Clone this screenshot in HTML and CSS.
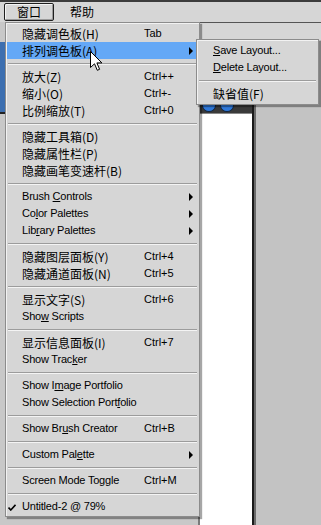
FILE: index.html
```html
<!DOCTYPE html>
<html lang="zh-CN">
<head>
  <meta charset="UTF-8" />
  <title>窗口菜单</title>
  <link rel="stylesheet" href="styles.css">
</head>
<body>
  <div class="menubar">
    <span class="top-item open">窗口</span>
    <span class="top-item">帮助</span>
  </div>

  <div class="workspace">
    <div class="side">
      <div class="side-title"></div>
    </div>
    <div class="doc-area">
      <div class="propbar"></div>
      <div class="doc-row">
        <div class="doc-window">
          <div class="doc-title"><span class="dot"></span><span class="dot"></span></div>
          <div class="doc-canvas"></div>
        </div>
        <div class="desk"></div>
      </div>
    </div>
  </div>

  <div class="menu main-menu">
    <div class="item"><span class="cn">隐藏调色板(H)</span><span class="key">Tab</span></div>
    <div class="item active"><span class="cn">排列调色板(A)</span><span></span><span class="arrow"></span></div>
    <div class="sep"></div>
    <div class="item"><span class="cn">放大(Z)</span><span class="key">Ctrl++</span></div>
    <div class="item"><span class="cn">缩小(O)</span><span class="key">Ctrl+-</span></div>
    <div class="item"><span class="cn">比例缩放(T)</span><span class="key">Ctrl+0</span></div>
    <div class="sep"></div>
    <div class="item"><span class="cn">隐藏工具箱(D)</span></div>
    <div class="item"><span class="cn">隐藏属性栏(P)</span></div>
    <div class="item"><span class="cn">隐藏画笔变速杆(B)</span></div>
    <div class="sep"></div>
    <div class="item"><span>Brush <u>C</u>ontrols</span><span></span><span class="arrow"></span></div>
    <div class="item"><span>Co<u>l</u>or Palettes</span><span></span><span class="arrow"></span></div>
    <div class="item"><span>Lib<u>r</u>ary Palettes</span><span></span><span class="arrow"></span></div>
    <div class="sep"></div>
    <div class="item"><span class="cn">隐藏图层面板(Y)</span><span class="key">Ctrl+4</span></div>
    <div class="item"><span class="cn">隐藏通道面板(N)</span><span class="key">Ctrl+5</span></div>
    <div class="sep"></div>
    <div class="item"><span class="cn">显示文字(S)</span><span class="key">Ctrl+6</span></div>
    <div class="item"><span>Sho<u>w</u> Scripts</span></div>
    <div class="sep"></div>
    <div class="item"><span class="cn">显示信息面板(I)</span><span class="key">Ctrl+7</span></div>
    <div class="item"><span>Show Trac<u>k</u>er</span></div>
    <div class="sep"></div>
    <div class="item"><span>Show I<u>m</u>age Portfolio</span></div>
    <div class="item"><span>Show Selection Port<u>f</u>olio</span></div>
    <div class="sep"></div>
    <div class="item"><span>Show Br<u>u</u>sh Creator</span><span class="key">Ctrl+B</span></div>
    <div class="sep"></div>
    <div class="item"><span>Custom Pal<u>e</u>tte</span><span></span><span class="arrow"></span></div>
    <div class="sep"></div>
    <div class="item"><span>Screen Mode Toggle</span><span class="key">Ctrl+M</span></div>
    <div class="sep"></div>
    <div class="item checked">
      <svg class="check" width="8" height="7" viewBox="0 0 8 7"><path d="M0.5 3.5 L2.8 6 L7.5 0.8" fill="none" stroke="#000" stroke-width="1.6"/></svg>
      <span>Untitled-2 @ 79%</span>
    </div>
  </div>

  <div class="menu sub-menu">
    <div class="item"><span><u>S</u>ave Layout...</span></div>
    <div class="item"><span><u>D</u>elete Layout...</span></div>
    <div class="sep"></div>
    <div class="item"><span class="cn">缺省值(F)</span></div>
  </div>

  <svg class="cursor" width="13" height="21" viewBox="0 0 13 21">
    <path d="M0.5 0.5 L0.5 16.5 L4.5 12.8 L7.3 19.3 L9.6 18.3 L6.9 11.9 L11.9 11.9 Z" fill="#fff" stroke="#000" stroke-width="1"/>
  </svg>
</body>
</html>
```

FILE: styles.css
```css
body {
  margin: 0;
  width: 321px;
  height: 525px;
  overflow: hidden;
  background: #c3c3c3;
  font-family: "Liberation Sans", "Noto Sans CJK SC", sans-serif;
  font-size: 11px;
  color: #000;
}

.menubar {
  height: 20px;
  border-top: 2px solid #3c3c3c;
  background: #d6d6d6;
  display: flex;
  align-items: center;
  padding-left: 4px;
}

.top-item {
  font-family: "Noto Sans CJK SC", sans-serif;
  font-size: 12px;
  line-height: 14px;
  padding: 1px 12px;
  margin-right: 4px;
}

.top-item.open {
  width: 24px;
  border: 1px solid #1e1e1e;
  border-radius: 2px;
  box-shadow: inset 1px 1px #f4f4f4, inset -1px -1px #9a9a9a;
  text-align: center;
}

.workspace {
  display: flex;
  height: 503px;
}

.side {
  width: 198px;
  background: #c8c8c8;
}

.side-title {
  margin-top: 20px;
  height: 70px;
  background: #3d6fb0;
  border-bottom: 2px solid #222;
}

.doc-area {
  flex: 1;
  display: flex;
  flex-direction: column;
}

.propbar {
  height: 17px;
  background: #d6d6d6;
  border-top: 1px solid #555;
  border-left: 1px solid #555;
}

.doc-row {
  flex: 1;
  display: flex;
}

.doc-window {
  width: 52px;
  display: flex;
  flex-direction: column;
  border-left: 2px solid #7a7a7a;
  border-right: 2px solid #1a1a1a;
  box-shadow: 2px 0 #6a6a6a;
  background: #fff;
}

.doc-title {
  height: 72px;
  background: #3a3a3a;
  display: flex;
  align-items: flex-end;
  gap: 4px;
  padding: 0 0 1px 2px;
  border-bottom: 1px solid #888;
}

.dot {
  width: 12px;
  height: 11px;
  border-radius: 50%;
  background: #2f78d8;
  border: 1px solid #10243f;
}

.doc-canvas {
  flex: 1;
  background: #fff;
}

.desk {
  flex: 1;
  margin-left: 2px;
  background: #c3c3c3;
}

.menu {
  position: absolute;
  background: #d6d6d6;
  border: 1px solid #8c8c8c;
  box-shadow: inset 1px 1px #f2f2f2, 2px 2px 1px rgba(0, 0, 0, 0.35);
}

.main-menu {
  left: 5px;
  top: 22px;
  width: 191px;
  padding: 2px 1px 1px;
}

.sub-menu {
  left: 196px;
  top: 39px;
  width: 119px;
  padding: 2px 1px;
}

.item {
  display: grid;
  grid-template-columns: 122px 1fr auto;
  align-items: center;
  height: 17px;
  line-height: 17px;
  padding: 0 5px 0 15px;
  letter-spacing: -0.2px;
  white-space: nowrap;
}

.sub-menu .item {
  grid-template-columns: 1fr;
}

.item.active {
  background: #64a8f6;
}

.item u {
  text-decoration: underline;
  text-underline-offset: 1px;
}

.cn {
  font-family: "Noto Sans CJK SC", sans-serif;
  font-size: 12px;
  letter-spacing: 0;
}

.key {
  letter-spacing: 0;
}

.arrow {
  width: 0;
  height: 0;
  border-left: 4px solid #000;
  border-top: 4px solid transparent;
  border-bottom: 4px solid transparent;
}

.item.checked {
  position: relative;
}

.check {
  position: absolute;
  left: 1px;
  top: 6px;
}

.sep {
  margin: 4px 1px 3px;
  border-top: 1px solid #9c9c9c;
  border-bottom: 1px solid #f4f4f4;
}

.cursor {
  position: absolute;
  left: 90px;
  top: 51px;
}
```
